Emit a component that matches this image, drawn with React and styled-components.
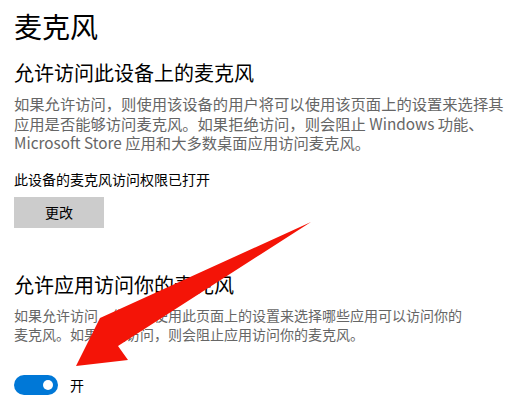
import React from "react"
import styled, { createGlobalStyle } from "styled-components"

const GlobalStyle = createGlobalStyle`
  html, body {
    margin: 0;
    padding: 0;
    background: #fff;
  }
  body {
    font-family: "Noto Sans CJK SC", "Noto Sans", sans-serif;
    width: 531px;
    height: 406px;
    overflow: hidden;
  }
`

const App = () => {
  const [on, setOn] = React.useState(true)
  return (
    <>
      <GlobalStyle />
      <Page>
        <Title>麦克风</Title>
        <Section>
          <SectionTitle>允许访问此设备上的麦克风</SectionTitle>
          <Desc large>
            如果允许访问，则使用该设备的用户将可以使用该页面上的设置来选择其应用是否能够访问麦克风。如果拒绝访问，则会阻止 Windows 功能、Microsoft Store 应用和大多数桌面应用访问麦克风。
          </Desc>
          <Status>此设备的麦克风访问权限已打开</Status>
          <ChangeButton>更改</ChangeButton>
        </Section>
        <Section second>
          <SectionTitle>允许应用访问你的麦克风</SectionTitle>
          <Desc>
            如果允许访问，你可以使用此页面上的设置来选择哪些应用可以访问你的麦克风。如果拒绝访问，则会阻止应用访问你的麦克风。
          </Desc>
          <ToggleRow>
            <Toggle on={on ? 1 : 0} onClick={() => setOn(!on)}>
              <Knob on={on ? 1 : 0} />
            </Toggle>
            <ToggleLabel>{on ? "开" : "关"}</ToggleLabel>
          </ToggleRow>
        </Section>
        <Arrow viewBox="0 0 531 406">
          <polygon
            points="311,222 100,318 76,366 128,360 118,346"
            fill="#f41407"
          />
        </Arrow>
      </Page>
    </>
  )
}

export default App

const Page = styled.div`
  position: relative;
  width: 531px;
  height: 406px;
  padding: 6px 14px 0;
  box-sizing: border-box;
  color: #000;
`

const Title = styled.h1`
  margin: 0;
  font-size: 28px;
  font-weight: 400;
  line-height: 40px;
`

const Section = styled.section`
  margin-top: ${({ second }) => (second ? "42px" : "12px")};
`

const SectionTitle = styled.h2`
  margin: 0;
  font-size: 20px;
  font-weight: 400;
  line-height: 30px;
`

const Desc = styled.p`
  margin: 6px 0 0;
  width: ${({ large }) => (large ? "498px" : "460px")};
  font-size: ${({ large }) => (large ? "15.3px" : "14px")};
  line-height: ${({ large }) => (large ? "19.5px" : "19px")};
  color: #666;
`

const Status = styled.div`
  margin-top: 16px;
  font-size: 14px;
  line-height: 20px;
`

const ChangeButton = styled.button`
  margin-top: 8px;
  width: 90px;
  height: 31px;
  border: none;
  background: #cccccc;
  font-family: inherit;
  font-size: 14px;
  color: #000;
  cursor: pointer;
`

const ToggleRow = styled.div`
  margin-top: 31px;
  display: flex;
  align-items: center;
  gap: 12px;
`

const Toggle = styled.div`
  width: 44px;
  height: 20px;
  border-radius: 10px;
  background: ${({ on }) => (on ? "#0078d7" : "#fff")};
  border: ${({ on }) => (on ? "none" : "2px solid #333")};
  position: relative;
  cursor: pointer;
`

const Knob = styled.span`
  position: absolute;
  top: 5px;
  left: ${({ on }) => (on ? "29px" : "5px")};
  width: 10px;
  height: 10px;
  border-radius: 50%;
  background: ${({ on }) => (on ? "#fff" : "#333")};
`

const ToggleLabel = styled.span`
  font-size: 14px;
  line-height: 20px;
`

const Arrow = styled.svg`
  position: absolute;
  top: 0;
  left: 0;
  width: 531px;
  height: 406px;
  pointer-events: none;
`
